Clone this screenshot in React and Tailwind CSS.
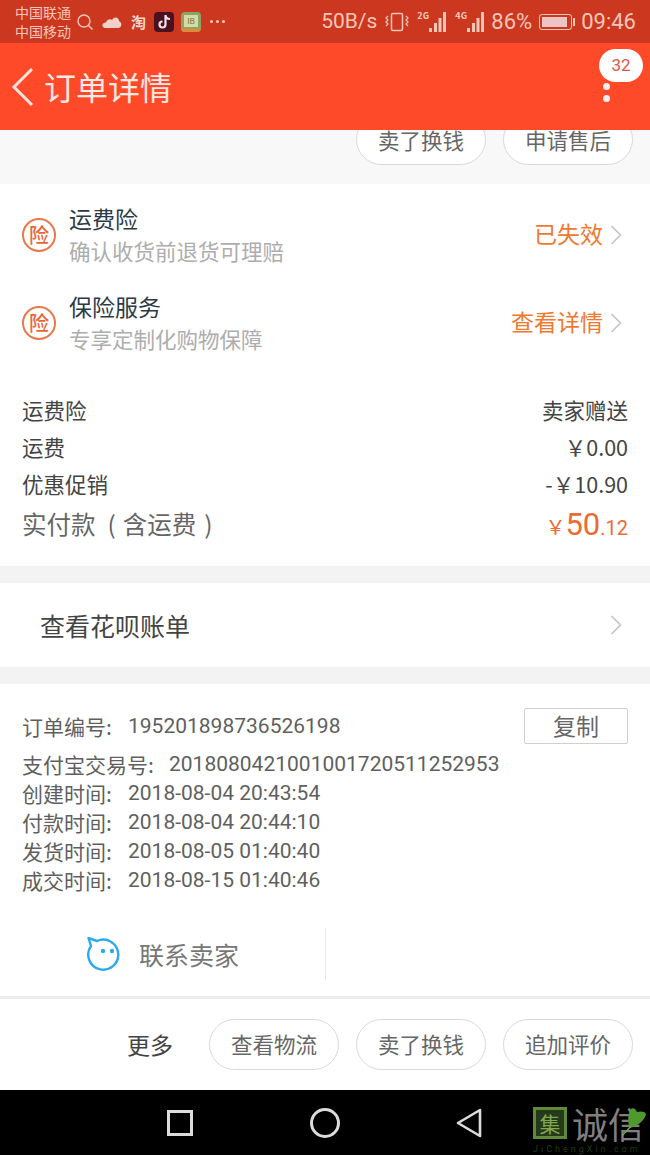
import React from "react";

const font = { fontFamily: '"Noto Sans CJK SC", Roboto, sans-serif' };

function Chevron({ className = "" }) {
  return (
    <svg width="14" height="22" viewBox="0 0 14 22" fill="none" className={className}>
      <path d="M2.5 2 L11.5 11 L2.5 20" stroke="#c4c4c4" strokeWidth="1.6" />
    </svg>
  );
}

function Signal({ label }) {
  return (
    <div className="relative h-[24px] w-[32px]">
      <span className="absolute left-0 top-[1px] text-[9px] font-bold leading-[10px] text-[#f5c6b8]">{label}</span>
      <svg width="32" height="24" viewBox="0 0 32 24" className="absolute left-0 top-0">
        <g fill="#f5c6b8">
          <rect x="12" y="18" width="3" height="4" />
          <rect x="17" y="13" width="3" height="9" />
          <rect x="21.5" y="8" width="3" height="14" />
          <rect x="26" y="2" width="3" height="20" />
        </g>
      </svg>
    </div>
  );
}

function StatusBar() {
  const rb = { fontFamily: "Roboto, sans-serif" };
  return (
    <div className="flex h-[43px] items-center bg-[#cc3720] pl-[15px] pr-[14px] text-[#f5c6b8]">
      <div className="w-[58px] text-[14px] leading-[19px]">
        <div>中国联通</div>
        <div>中国移动</div>
      </div>
      <svg width="18" height="18" viewBox="0 0 18 18" fill="none" className="ml-[3px]">
        <circle cx="8" cy="8" r="6" stroke="#f5c6b8" strokeWidth="1.4" />
        <path d="M12.5 12.5 L16.5 16.5" stroke="#f5c6b8" strokeWidth="1.4" />
      </svg>
      <svg width="20" height="14" viewBox="0 0 20 14" className="ml-[8px]">
        <path d="M4 13 C1 13 0 11 0.5 9.5 C1 8 3 7.5 4 7.5 C5 4.5 8 3.5 10 5 C12 1 17 2 17 6 C19 7 20 9 19 11 C18.5 12.5 17 13 15.5 13 Z" fill="#f3d0c8" />
      </svg>
      <span className="ml-[9px] w-[18px] text-[15px] font-bold leading-[18px] text-[#f5d5cc]">淘</span>
      <div className="ml-[5px] flex h-[20px] w-[20px] items-center justify-center rounded-[4px] bg-[#4a1220]">
        <svg width="13" height="15" viewBox="0 0 13 15" fill="none">
          <path d="M7.5 1 V10.5 A3 3 0 1 1 4.5 7.5 M7.5 1.5 C8 4 10 5 12 5" stroke="#f7dfe4" strokeWidth="2.2" />
        </svg>
      </div>
      <div className="ml-[7px] flex h-[20px] w-[20px] flex-col items-center overflow-hidden rounded-[4px] bg-[#8ea463]">
        <div className="mt-[3px] flex h-[12px] w-[14px] items-center justify-center bg-[#d9d9a8] text-[8px] leading-none text-[#5d7a34]">IB</div>
        <div className="mt-[2px] h-[3px] w-full bg-[#e08a3a]" />
      </div>
      <div className="ml-[9px] flex gap-[3px]">
        <span className="h-[3px] w-[3px] rounded-full bg-[#f5c6b8]" />
        <span className="h-[3px] w-[3px] rounded-full bg-[#f5c6b8]" />
        <span className="h-[3px] w-[3px] rounded-full bg-[#f5c6b8]" />
      </div>
      <div className="flex-1" />
      <span className="text-[21px] leading-none" style={rb}>50B/s</span>
      <svg width="26" height="22" viewBox="0 0 26 22" fill="none" className="ml-[7px]">
        <rect x="7.5" y="2.5" width="11" height="17" rx="1.5" stroke="#f5c6b8" strokeWidth="1.5" />
        <path d="M4 5 L2 7 L4 9 L2 11 L4 13 L2 15 M22 5 L24 7 L22 9 L24 11 L22 13 L24 15" stroke="#f5c6b8" strokeWidth="1.2" />
      </svg>
      <div className="ml-[7px]"><Signal label="2G" /></div>
      <div className="ml-[6px]"><Signal label="4G" /></div>
      <span className="ml-[4px] text-[22px] leading-none" style={rb}>86%</span>
      <div className="ml-[7px] flex items-center">
        <div className="flex h-[16px] w-[33px] items-center rounded-[3px] border border-[#f5c6b8] p-[2px]">
          <div className="h-full w-[25px] bg-[#ecc4c4]" />
        </div>
        <div className="ml-[1px] h-[8px] w-[2px] bg-[#f5c6b8]" />
      </div>
      <span className="ml-[6px] text-[22px] leading-none" style={rb}>09:46</span>
    </div>
  );
}

function Header() {
  return (
    <div className="relative flex h-[87px] items-center bg-[#ff4a2a] pl-[11px]">
      <svg width="24" height="40" viewBox="0 0 24 40" fill="none">
        <path d="M21 2 L3 20 L21 38" stroke="#fde3dc" strokeWidth="3" />
      </svg>
      <span className="mb-[2px] ml-[9px] text-[32px] leading-none text-[#fde8e3]">订单详情</span>
      <div className="absolute right-[7px] top-[6px] flex h-[33px] w-[44px] items-center justify-center rounded-full bg-white text-[17px] text-[#e0554a]" style={{ fontFamily: "Roboto, sans-serif" }}>32</div>
      <div className="absolute right-[40px] top-[40px] flex flex-col gap-[5px]">
        <span className="h-[7px] w-[7px] rounded-full bg-[#fdeee9]" />
        <span className="h-[7px] w-[7px] rounded-full bg-[#fdeee9]" />
      </div>
    </div>
  );
}

function Pill({ children }) {
  return (
    <div className="flex h-[51px] w-[130px] items-center justify-center rounded-full border border-[#d9d9d9] bg-white text-[21.5px] leading-none text-[#666666]">
      {children}
    </div>
  );
}

function TopStrip() {
  return (
    <div className="flex h-[54px] items-start justify-end gap-[17px] overflow-hidden bg-[#f8f8f8] pr-[17px]">
      <div className="mt-[-16px]"><Pill>卖了换钱</Pill></div>
      <div className="mt-[-16px]"><Pill>申请售后</Pill></div>
    </div>
  );
}

function InsureRow({ title, sub, action }) {
  return (
    <div className="flex h-[88px] items-center pl-[22px] pr-[27px]">
      <div className="flex h-[34px] w-[34px] shrink-0 items-center justify-center rounded-full border-2 border-[#e8794a] text-[20px] font-medium leading-none text-[#e8663a]">险</div>
      <div className="ml-[13px] flex-1">
        <div className="text-[23px] leading-[26px] text-[#2c3a47]">{title}</div>
        <div className="mt-[6px] text-[21.5px] leading-[28px] text-[#adadad]">{sub}</div>
      </div>
      <span className="mb-[4px] text-[23px] leading-none text-[#f0782f]">{action}</span>
      <Chevron className="ml-[6px]" />
    </div>
  );
}

function PriceRow({ label, value }) {
  return (
    <div className="flex h-[37px] items-center justify-between text-[21.5px] leading-none text-[#444444]">
      <span>{label}</span>
      <span>{value}</span>
    </div>
  );
}

function Summary() {
  return (
    <div className="h-[382px] bg-white pt-[7px]">
      <InsureRow title="运费险" sub="确认收货前退货可理赔" action="已失效" />
      <InsureRow title="保险服务" sub="专享定制化购物保障" action="查看详情" />
      <div className="px-[22px] pt-[24px]">
        <PriceRow label="运费险" value="卖家赠送" />
        <PriceRow label="运费" value="￥0.00" />
        <PriceRow label="优惠促销" value="-￥10.90" />
        <div className="flex h-[45px] items-center justify-between">
          <span className="text-[24.5px] leading-none text-[#666666]">
            实付款<span className="ml-[12px] mr-[7px]">(</span>含运费<span className="ml-[8px]">)</span>
          </span>
          <span className="flex items-baseline leading-none text-[#ec6b33]">
            <span className="text-[20px]">￥</span>
            <span className="text-[31px]" style={{ fontFamily: "Roboto, sans-serif" }}>50</span>
            <span className="text-[20px]" style={{ fontFamily: "Roboto, sans-serif" }}>.12</span>
          </span>
        </div>
      </div>
    </div>
  );
}

function InfoRow({ label, value, width = "w-[106px]" }) {
  return (
    <div className="flex h-[29px] items-center text-[21px] leading-none text-[#5f5f5f]">
      <span className={`${width} shrink-0`}>{label}</span>
      <span style={{ fontFamily: "Roboto, sans-serif" }}>{value}</span>
    </div>
  );
}

function OrderInfo() {
  return (
    <div className="h-[312px] bg-white">
      <div className="px-[22px] pt-[23px]">
        <div className="flex h-[39px] items-center justify-between">
          <div className="flex items-center text-[21px] leading-none text-[#5f5f5f]">
            <span className="w-[106px]">订单编号:</span>
            <span style={{ fontFamily: "Roboto, sans-serif" }}>195201898736526198</span>
          </div>
          <div className="mt-[-2px] flex h-[36px] w-[104px] items-center justify-center rounded-[2px] border border-[#cfcfcf] text-[23px] leading-none text-[#666666]">复制</div>
        </div>
        <div className="mt-[4px]">
          <InfoRow label="支付宝交易号:" value="2018080421001001720511252953" width="w-[147px]" />
        </div>
        <InfoRow label="创建时间:" value="2018-08-04 20:43:54" />
        <InfoRow label="付款时间:" value="2018-08-04 20:44:10" />
        <InfoRow label="发货时间:" value="2018-08-05 01:40:40" />
        <InfoRow label="成交时间:" value="2018-08-15 01:40:46" />
      </div>
      <div className="mt-[33px] flex h-[52px]">
        <div className="flex w-[326px] items-center border-r border-[#e8e8e8] pl-[87px]">
          <svg width="34" height="34" viewBox="0 0 34 34" fill="none">
            <path d="M4 9 A15 15 0 1 0 10 4 L1.5 1 Z" stroke="#2da9ec" strokeWidth="2.4" strokeLinejoin="round" />
            <circle cx="16" cy="14" r="2.2" fill="#2da9ec" />
            <circle cx="25" cy="14" r="2.2" fill="#2da9ec" />
          </svg>
          <span className="ml-[18px] text-[25px] leading-none text-[#777777]">联系卖家</span>
        </div>
      </div>
    </div>
  );
}

function BottomBar() {
  return (
    <div className="flex h-[94px] items-center border-t-[3px] border-[#ececec] bg-white pb-[1px] pl-[127px]">
      <span className="mr-[36px] text-[23px] leading-none text-[#444444]">更多</span>
      <div className="flex gap-[17px]">
        <Pill>查看物流</Pill>
        <Pill>卖了换钱</Pill>
        <Pill>追加评价</Pill>
      </div>
    </div>
  );
}

function NavBar() {
  return (
    <div className="relative flex h-[65px] items-center bg-black pl-[167px]">
      <div className="h-[26px] w-[26px] border-[3px] border-[#dcdcdc]" />
      <div className="ml-[117px] h-[30px] w-[30px] rounded-full border-[3px] border-[#dcdcdc]" />
      <svg width="28" height="30" viewBox="0 0 28 30" fill="none" className="ml-[115px]">
        <path d="M25 2 L3 15 L25 28 Z" stroke="#dcdcdc" strokeWidth="2.6" strokeLinejoin="round" />
      </svg>
      <div className="absolute left-[533px] top-[17px] flex items-start">
        <div className="flex h-[32px] w-[34px] items-center justify-center border-[3px] border-[#5f8a3a] bg-[#26391a] text-[21px] leading-none text-[#7fa850]">集</div>
        <span className="ml-[5px] h-[32px] text-[36px] leading-[32px] text-[#7f7f7f]">诚信</span>
      </div>
      <svg width="26" height="30" viewBox="0 0 26 30" className="absolute left-[622px] top-[16px]">
        <path d="M8 22 C5 15 6 8 9 3 C12 1 14 4 15 6 C18 5 23 5 24 8 C23 14 16 20 8 22 Z" fill="#4f9a2e" />
        <path d="M9 20 L0 30" stroke="#6fae4a" strokeWidth="1.2" />
      </svg>
      <div className="absolute left-[533px] top-[55px] text-[9px] leading-none tracking-[3px] text-[#1f3f18]" style={{ fontFamily: "Roboto, sans-serif" }}>JiChengXin.com</div>
    </div>
  );
}

export default function App() {
  return (
    <div className="h-[1155px] w-[650px] overflow-hidden bg-[#f3f3f3]" style={font}>
      <StatusBar />
      <Header />
      <TopStrip />
      <Summary />
      <div className="h-[17px]" />
      <div className="flex h-[84px] items-center justify-between bg-white pl-[40px] pr-[27px]">
        <span className="text-[25px] leading-none text-[#444444]">查看花呗账单</span>
        <Chevron />
      </div>
      <div className="h-[17px]" />
      <OrderInfo />
      <BottomBar />
      <NavBar />
    </div>
  );
}
